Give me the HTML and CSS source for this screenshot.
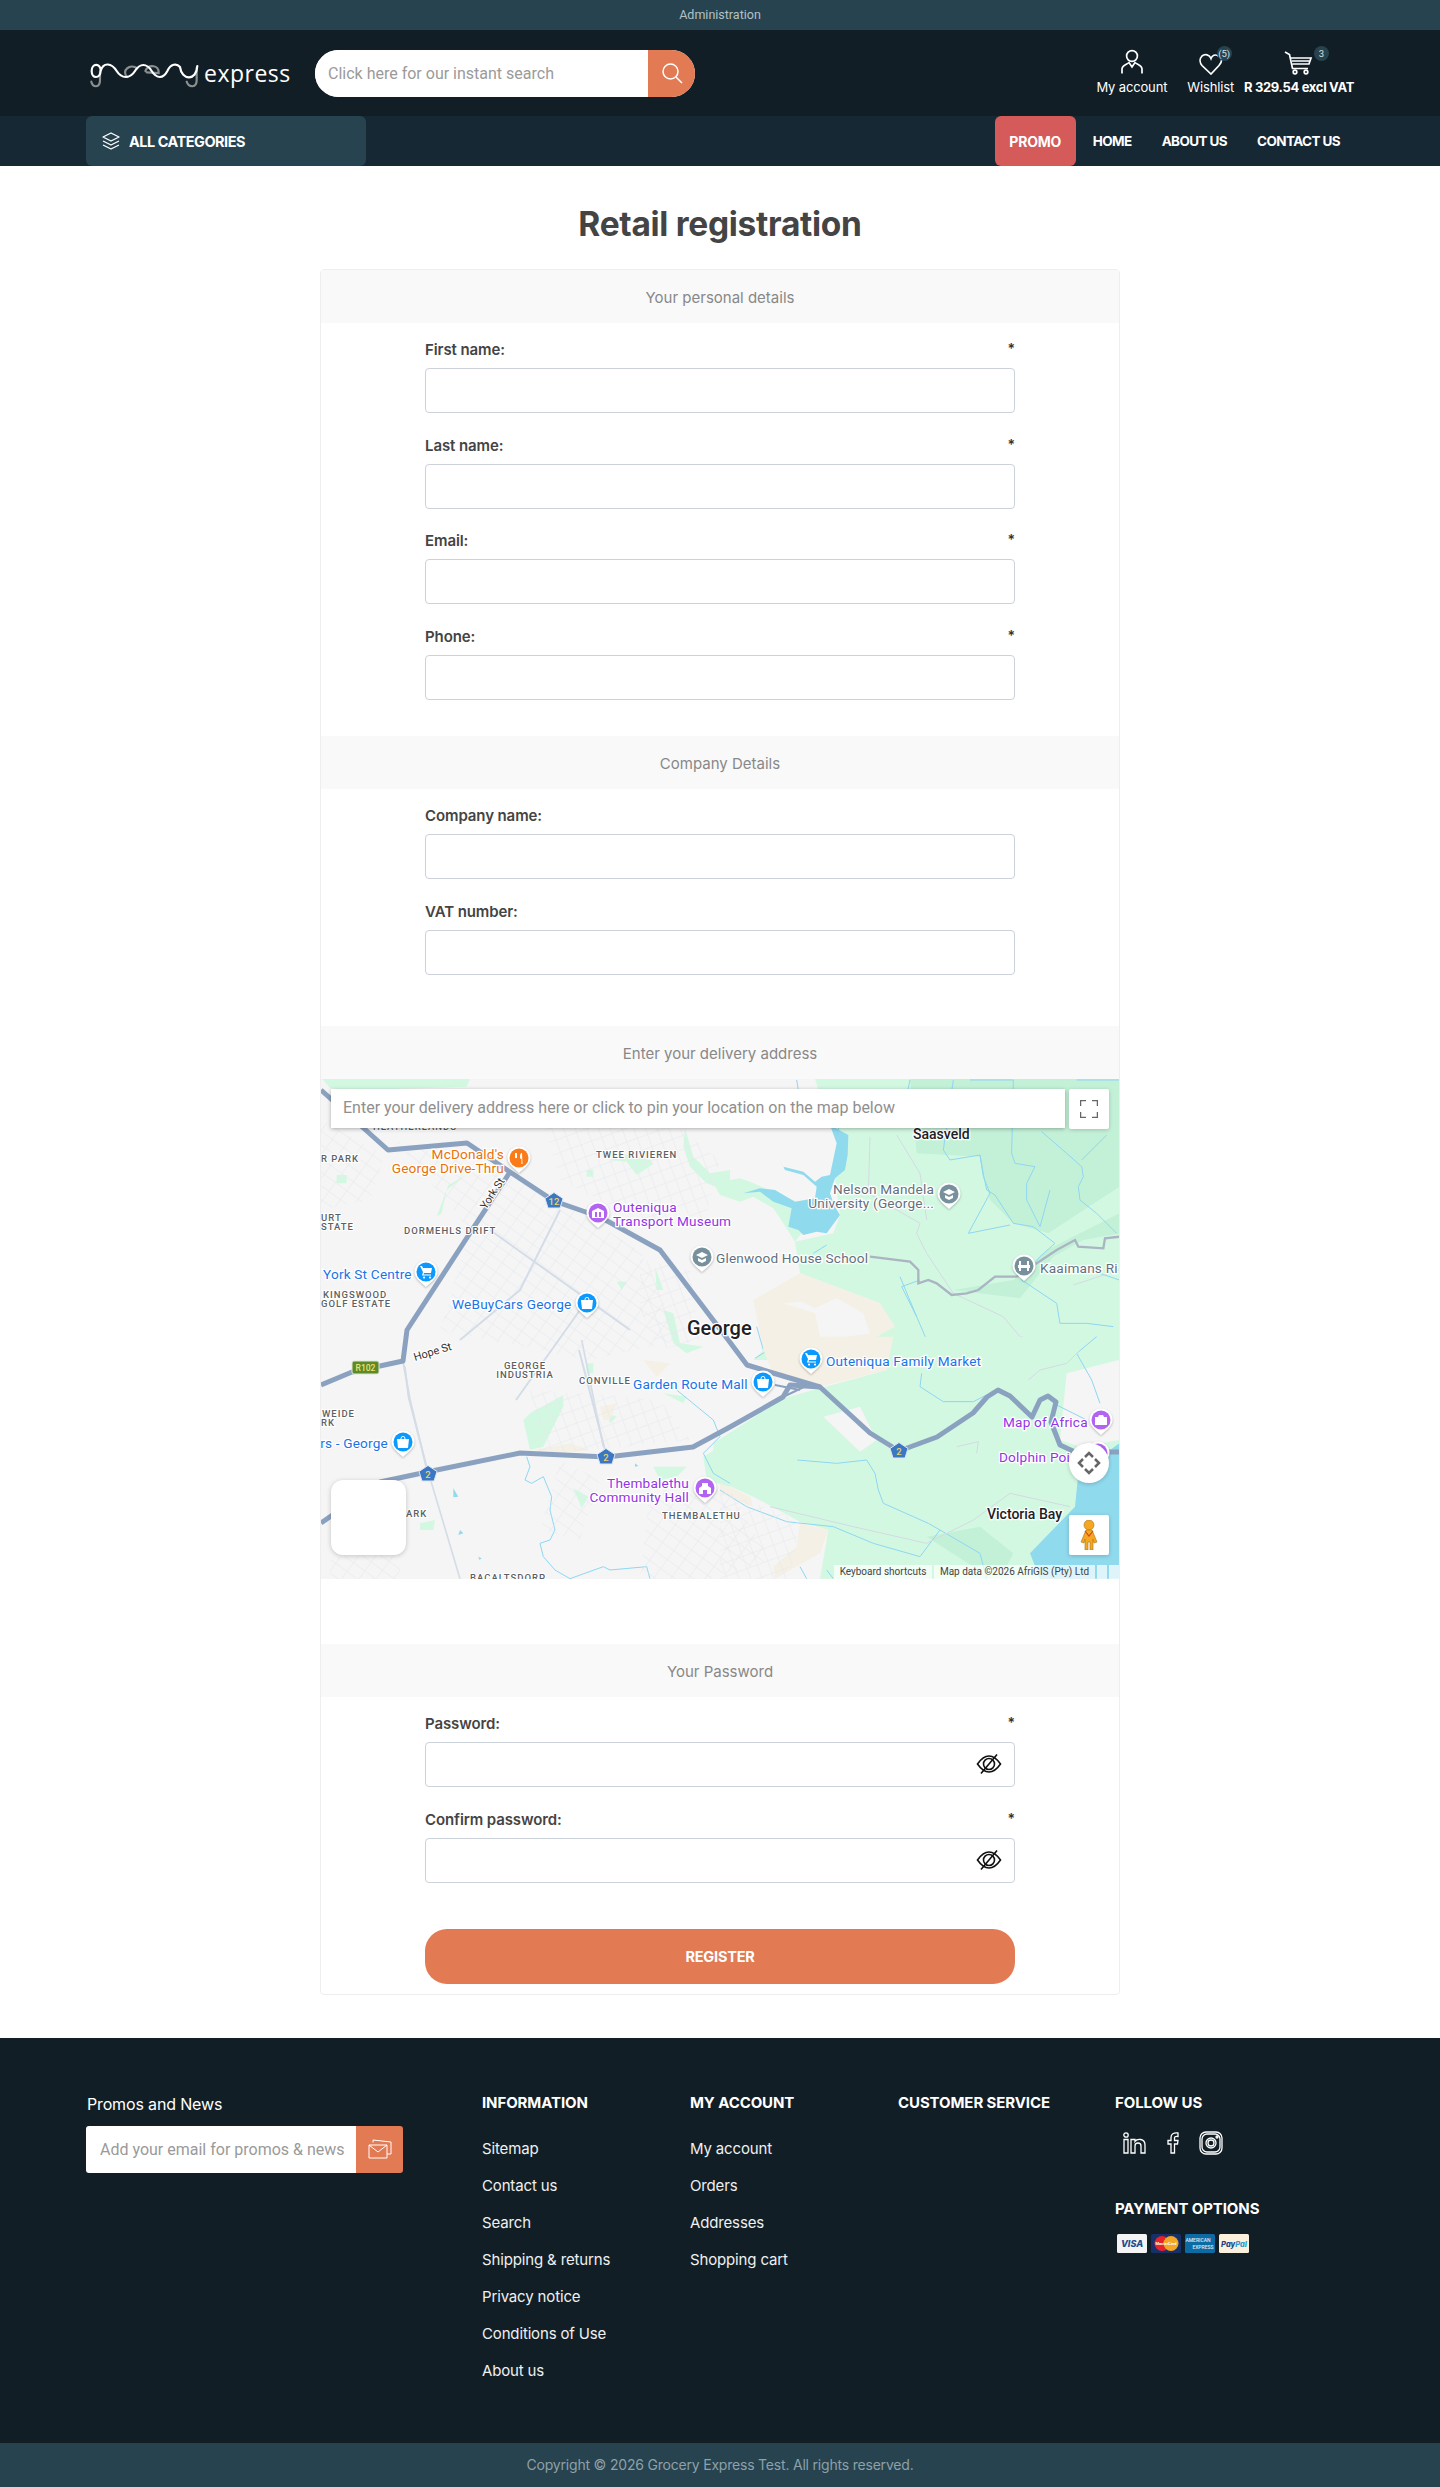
FILE: index.html
```html
<!DOCTYPE html>
<html lang="en">
<head>
<meta charset="utf-8">
<title>Retail registration</title>
<link rel="stylesheet" href="styles.css">
</head>
<body>
<div class="topbar"><a>Administration</a></div>
<header class="header">
  <div class="logo">
    <svg class="logo-wave" viewBox="30 70 330 84" aria-hidden="true">
      <path class="lw-grey" d="M60 100 L60 128 C60 152 38 150 34 132 M142 118 C122 100 150 76 172 92 M196 100 C206 78 238 82 236 106 L200 104 M350 90 L350 128 C350 152 326 150 320 132"/>
      <path class="lw-white" d="M62 98 C62 76 35 76 35 100 C35 124 60 124 62 100 C70 72 95 76 110 100 C125 124 150 124 165 100 C180 76 200 76 215 100 C230 124 250 124 262 100 C272 78 290 76 300 88 C305 130 350 130 352 85"/>
    </svg>
    <span class="logo-text">express</span>
  </div>
  <form class="search">
    <input class="search-input" type="text" placeholder="Click here for our instant search">
    <button class="search-btn" type="button" aria-label="Search">
      <svg viewBox="0 0 24 24" width="24" height="24"><circle cx="10.5" cy="10.5" r="7.5"/><path d="M16 16l6 6"/></svg>
    </button>
  </form>
  <div class="header-links">
    <a class="hlink">
      <span class="hicon">
        <svg viewBox="0 0 24 26" width="24" height="26"><circle cx="12" cy="7" r="5.4"/><path d="M2 24.500V20C2 16 7 15.500 9 13.500L12 18L15 13.500C17 15.500 22 16 22 20V24.500"/></svg>
      </span>
      <span class="hlabel">My account</span>
    </a>
    <a class="hlink">
      <span class="hicon">
        <svg viewBox="0 0 24 22" width="24" height="22"><path d="M20 3.500C16 .5 13 2.500 12 5.500C10.500 1.500 6 .5 3 3C0 6 1 10 3 12.500L12 21L20 12.500C22.500 9.500 23 7 22.500 5.500"/></svg>
        <b class="badge badge-w">(5)</b>
      </span>
      <span class="hlabel">Wishlist</span>
    </a>
    <a class="hlink hlink-cart">
      <span class="hicon">
        <svg viewBox="0 0 30 24" width="30" height="24"><path d="M1 1L5.500 3.500L8.500 17.500H24M7 7H27L25 13H8.500M8 10H26"/><circle cx="11" cy="21" r="1.800"/><circle cx="22" cy="21" r="1.800"/></svg>
        <b class="badge badge-c">3</b>
      </span>
      <span class="hprice">R 329.54 excl VAT</span>
    </a>
  </div>
</header>
<nav class="nav">
  <a class="cat-btn">
    <svg viewBox="0 0 20 18" width="20" height="18"><path d="M10 1L18 5L10 9L2 5Z"/><path d="M2 9L10 13L18 9"/><path d="M2 13L10 17L18 13"/></svg>
    ALL CATEGORIES
  </a>
  <div class="nav-links">
    <a class="promo">PROMO</a>
    <a>HOME</a>
    <a>ABOUT US</a>
    <a>CONTACT US</a>
  </div>
</nav>
<main class="main">
  <h1 class="title">Retail registration</h1>
  <form class="card">
    <div class="sec-head">Your personal details</div>
    <div class="fields fields-a">
      <div class="field"><div class="label-row"><label>First name:</label><span class="req">*</span></div><input class="inp" type="text"></div>
      <div class="field"><div class="label-row"><label>Last name:</label><span class="req">*</span></div><input class="inp" type="text"></div>
      <div class="field"><div class="label-row"><label>Email:</label><span class="req">*</span></div><input class="inp" type="text"></div>
      <div class="field"><div class="label-row"><label>Phone:</label><span class="req">*</span></div><input class="inp" type="text"></div>
    </div>
    <div class="sec-head">Company Details</div>
    <div class="fields fields-b">
      <div class="field"><div class="label-row"><label>Company name:</label></div><input class="inp" type="text"></div>
      <div class="field"><div class="label-row"><label>VAT number:</label></div><input class="inp" type="text"></div>
    </div>
    <div class="sec-head">Enter your delivery address</div>
    <div class="map">
      <svg class="map-svg" viewBox="321 1079 798 500" width="798" height="500">
        <defs>
          <pattern id="gridA" width="14" height="11" patternUnits="userSpaceOnUse" patternTransform="rotate(36)"><path class="st" d="M0 0H14M0 0V11"/></pattern>
          <pattern id="gridB" width="11" height="13" patternUnits="userSpaceOnUse" patternTransform="rotate(-20)"><path class="st" d="M0 0H11M0 0V13"/></pattern>
          <g id="pin"><path class="pin-o" d="M-11.500 0A11.500 11.500 0 1 1 11.500 0C11.500 6 5 10 0 15C-5 10 -11.500 6 -11.500 0Z"/><circle r="9.500" fill="currentColor"/></g>
          <path id="shield" class="sh" d="M0 -8.500L9 -2.500L6 7H-6L-9 -2.500Z"/>
        </defs>
        <rect x="321" y="1079" width="798" height="500" class="m-bg"/>
        <g transform="translate(310 1060) scale(.33333)">
          <path class="m-g" d="M30 57H480L470 80L130 90L60 85L40 60Z"/>
          <path class="m-g" d="M1125 205L1150 290L1200 340L1260 330V395L1190 370L1140 320L1120 260ZM930 280L1020 300L1030 312L980 345L950 305L900 300Z"/>
          <path class="m-g" d="M380 470L415 375L470 345L410 390L395 460ZM80 345H110V370H80ZM830 330H850V350H830ZM1060 750L1090 760L1110 850L1180 860L1130 880L1090 850ZM920 665L950 665L935 690ZM1035 620L1060 690L1040 690Z"/>
        </g>
        <g transform="translate(720 1060) scale(.33333)">
          <path class="m-g" d="M285 57H480V900H100L130 870L310 860L450 840L525 800L480 730L240 640L225 545L340 520L360 465L345 355L384 225L330 205Z"/>
          <path class="m-g" d="M480 57H1198V900H480Z"/>
          <path class="m-g" d="M-20 370L60 355L90 365L160 395L230 425L285 415L290 460L225 545L190 490L160 445L100 410L60 425L0 405Z"/>
          <path class="m-dg" d="M570 57L590 280L780 290L810 420L880 490L985 520L1198 380V57Z"/>
          <path class="m-dg" d="M700 690L900 715L1000 590L1090 540L1198 520V460L980 570L880 660Z"/>
          <path class="m-w" d="M330 195L385 225L383 285L375 330L345 355L330 400L345 440L360 465L320 520L290 515L250 525L235 510L205 500L215 445L160 425L120 395L70 400L120 385L165 390L225 425L285 415L290 380L250 345L195 330L170 280L190 320L250 335L285 365L305 350L330 345L350 250Z"/>
          <path class="m-t" d="M100 720L240 640L480 730L525 800L450 840L310 860L130 870Z"/>
          <path class="m-l" d="M190 730L245 725L285 745L350 715L430 760L450 820L380 830L300 830L285 760Z"/>
          <path class="m-river" d="M360 190L350 230M230 60L235 90M570 60L540 200M700 60L670 270L690 300L780 285L790 340L800 390L825 405L880 490L940 500L1005 550L960 590L905 660L1010 730L1020 790L1100 790L1180 800M780 285L790 350L810 400L745 520L870 495M880 60L875 280L885 310L945 320L920 370L920 420L960 500L990 390M965 215L1040 280L1085 320L1090 350L1075 380L1080 420L1130 460L1190 520M1160 225L1085 300M1198 60L1070 60M750 60L880 60M540 650L590 770L620 840L520 860M320 555L280 580M110 800L130 870M105 895L145 870L260 875L450 840M600 660L545 680L590 770M1080 620L1198 660"/>
          <path class="m-minor" d="M450 230L445 400L600 490L590 520L620 580L700 700L850 770L900 830L1000 850L1040 890M530 225L600 340L620 480M1060 675L1198 630"/>
          <path class="m-gravel" d="M450 590L570 605L595 630L595 670L625 660L650 670L695 705L740 700L775 690L825 650L890 650L1010 570L1065 540L1075 560L1150 565L1155 535L1198 530"/>
        </g>
        <g transform="translate(720 1340) scale(.33333)">
          <path class="m-g" d="M500 -10H1198V716H300L325 570L240 545L100 470L0 425L-20 400V310L190 175L300 145L500 90Z"/>
          <path class="m-t" d="M130 -10H520L500 90L300 140L160 100L130 30Z"/>
          <path class="m-l" d="M310 230L420 200L470 300L420 335Z"/>
          <path class="m-l" d="M1040 100L1198 60V300L1080 320L1020 300Z"/>
          <path class="m-t" d="M0 425L90 470L100 500L0 460ZM240 550L325 570L300 640L165 716L160 680L230 620Z"/>
          <path class="m-dg" d="M620 590L780 560L880 640L860 680L760 680Z"/>
          <path class="m-w" d="M1198 310L1075 400L1065 500L930 640L960 716H1198Z"/>
          <path class="m-river" d="M0 450L80 500L200 545L340 560L460 610L600 650L660 570L780 640L800 716M232 360L350 370L440 360L465 400L475 450L490 490L625 550L660 570M605 100L600 140L670 185L760 185L800 165M1000 190L1100 240M1130 -10L1070 40L1115 120L1140 190M240 680L260 716M320 690L340 716"/>
          <path class="m-minor" d="M925 120L960 90L1040 70L1080 30M710 320L775 305L770 340M150 500L400 560L620 610L760 540L870 460L1050 500"/>
        </g>
        <g transform="translate(310 1340) scale(.33333)">
          <path class="m-g" d="M1260 300L1180 350L1190 420L1260 440ZM660 220L760 165L760 200L700 320L660 330L640 240ZM890 220L920 230L900 250ZM790 445L835 470L815 505ZM330 550L375 540L370 570L330 570ZM1030 380L1130 380L1100 410L1050 420ZM1060 160L1130 170L1120 190ZM830 70L850 70L850 100L830 100Z"/>
          <path class="m-t" d="M680 330L780 310L840 330L680 345ZM870 200L920 190L900 240L880 240ZM1000 60L1080 70L1040 110Z"/>
          <path class="m-river" d="M1100 150L1210 240L1230 290L1180 340L1210 400L1260 430M650 350L660 380L645 420L665 430L700 410L725 470L720 510L735 570L720 600L690 610L700 650L735 690L780 716M780 716L880 680L900 690L1010 680L1020 716"/>
          <path class="m-w" d="M430 445L445 470L430 472ZM450 570L460 580L445 585ZM505 650L515 655L508 660ZM975 370L985 378L975 380Z"/>
          <path class="m-minor2" d="M285 80L295 170L350 380L450 716M815 0L880 320"/>
        </g>
        <path class="m-grid-a" d="M395 1140L520 1180L640 1250L680 1340L590 1360L440 1330L470 1230Z"/>
        <path class="m-grid-a" d="M321 1120L385 1155L370 1200L321 1210Z"/>
        <path class="m-grid-b" d="M540 1110L630 1090L720 1160L705 1220L640 1220L560 1180Z"/>
        <path class="m-grid-b" d="M640 1260L690 1270L700 1340L660 1350L640 1310Z"/>
        <path class="m-grid-b" d="M530 1390L610 1395L660 1400L690 1440L540 1455Z"/>
        <path class="m-grid-a" d="M650 1490L730 1490L770 1560L710 1579L640 1579Z"/>
        <path class="m-grid-a" d="M560 1460L600 1480L580 1540L540 1530Z"/>
        <path class="m-grid-b" d="M720 1490L800 1520L790 1579L720 1579Z"/>
        <path class="m-grid-a" d="M330 1560L400 1540L400 1579L330 1579Z"/>
        <path class="m-arterial" d="M490 1230L630 1330M580 1310L516 1400M560 1210L520 1290L460 1340"/>
        <path class="m-arterial" d="M403 1361L410 1400L428 1474M579 1350L605 1450"/>
        <path class="m-road" d="M321 1090L388 1150L467 1143L510 1172L554 1201L600 1217L660 1250L723 1333L747 1365L773 1373L820 1387L870 1433L899 1451L937 1437L973 1413L987 1397L998 1390L1010 1396L1032 1417L1040 1400L1048 1396L1056 1402L1051 1422L1060 1445L1075 1452L1119 1452"/>
        <path class="m-road" d="M321 1385L352 1372L403 1361L407 1330L470 1233L510 1172"/>
        <path class="m-road" d="M321 1523L380 1482L427 1472L520 1453L607 1457L693 1447L730 1427L783 1397L790 1385L820 1387"/>
        <path class="m-road-thin" d="M783 1397L810 1384M775 1385L800 1390"/>
        <use href="#shield" x="554" y="1201"/><use href="#shield" x="428" y="1474"/><use href="#shield" x="606" y="1457"/><use href="#shield" x="899" y="1451"/>
        <text class="sh-t" x="554" y="1205">12</text><text class="sh-t" x="428" y="1478">2</text><text class="sh-t" x="606" y="1461">2</text><text class="sh-t" x="899" y="1455">2</text>
        <rect class="r102" x="352" y="1361" width="27" height="13" rx="2"/><text class="r102-t" x="365.500" y="1371">R102</text>
        <text class="m-area" x="373" y="1130">HEATHERLANDS</text>
        <text class="m-area" x="321" y="1162">R PARK</text>
        <text class="m-area" x="596" y="1158">TWEE RIVIEREN</text>
        <text class="m-area" x="321" y="1221">URT</text>
        <text class="m-area" x="321" y="1230">STATE</text>
        <text class="m-area" x="404" y="1234">DORMEHLS DRIFT</text>
        <text class="m-area" x="323" y="1298">KINGSWOOD</text>
        <text class="m-area" x="321" y="1307">GOLF ESTATE</text>
        <text class="m-area m-mid" x="525" y="1369">GEORGE</text>
        <text class="m-area m-mid" x="525" y="1378">INDUSTRIA</text>
        <text class="m-area" x="579" y="1384">CONVILLE</text>
        <text class="m-area" x="322" y="1417">WEIDE</text>
        <text class="m-area" x="321" y="1426">RK</text>
        <text class="m-area" x="406" y="1517">ARK</text>
        <text class="m-area" x="662" y="1519">THEMBALETHU</text>
        <text class="m-area m-mid" x="508" y="1581">BACALTSDORP</text>
        <text class="m-st" transform="translate(486 1210) rotate(-57)">York St</text>
        <text class="m-st" transform="translate(415 1361) rotate(-17)">Hope St</text>

        <text class="ml orange m-end" x="504" y="1159">McDonald's</text>
        <text class="ml orange m-end" x="504" y="1173">George Drive-Thru</text>
        <text class="ml purple" x="613" y="1212">Outeniqua</text>
        <text class="ml purple" x="613" y="1226">Transport Museum</text>
        <text class="ml grey" x="716" y="1263">Glenwood House School</text>
        <text class="ml blue" x="323" y="1279">York St Centre</text>
        <text class="ml blue" x="452" y="1309">WeBuyCars George</text>
        <text class="ml-big" x="687" y="1335">George</text>
        <text class="ml blue" x="826" y="1366">Outeniqua Family Market</text>
        <text class="ml blue" x="633" y="1389">Garden Route Mall</text>
        <text class="ml grey m-end" x="934" y="1194">Nelson Mandela</text>
        <text class="ml grey m-end" x="934" y="1208">University (George...</text>
        <text class="ml-dark" x="913" y="1139">Saasveld</text>
        <text class="ml grey" x="1040" y="1273">Kaaimans Ri</text>
        <text class="ml purple" x="1003" y="1427">Map of Africa</text>
        <text class="ml purple" x="999" y="1462">Dolphin Poi</text>
        <text class="ml-dark" x="987" y="1519">Victoria Bay</text>
        <text class="ml blue m-end" x="388" y="1448">rs - George</text>
        <text class="ml purple m-end" x="689" y="1488">Thembalethu</text>
        <text class="ml purple m-end" x="689" y="1502">Community Hall</text>

        <use href="#pin" class="c-orange" x="519" y="1158"/>
        <path class="gl" d="M515 1153v5h2v-5M516 1158v6M522 1153c-1.500 0-2 2-2 4s1 2 1.500 2v5h1z"/>
        <use href="#pin" class="c-purple" x="598" y="1213"/>
        <path class="gl" d="M592 1211L598 1208L604 1211V1218H592ZM595 1212V1217H597V1212ZM599 1212V1217H601V1212Z"/>
        <use href="#pin" class="c-grey" x="702" y="1257"/>
        <path class="gl" d="M696 1255L702 1252L708 1255L702 1258ZM698 1258L702 1260L706 1258V1261L702 1263L698 1261Z"/>
        <use href="#pin" class="c-blue" x="426" y="1272"/>
        <path class="gl" d="M420 1266H422L423 1268H432L431 1273H424L423.500 1274.500H431V1275.500H422L423 1272ZM424 1276.500a1 1 0 1 0 .1 0ZM430 1276.500a1 1 0 1 0 .1 0Z"/>
        <use href="#pin" class="c-blue" x="587" y="1303"/>
        <path class="gl" d="M581 1300H593L592 1309H582ZM584.500 1300C584.500 1296 589.500 1296 589.500 1300H588.500C588.500 1297 585.500 1297 585.500 1300Z"/>
        <use href="#pin" class="c-grey" x="949" y="1194"/>
        <path class="gl" d="M943 1192L949 1189L955 1192L949 1195ZM945 1195L949 1197L953 1195V1198L949 1200L945 1198Z"/>
        <use href="#pin" class="c-grey" x="1024" y="1266"/>
        <path class="gl" d="M1018 1268V1265H1019V1261H1021V1265H1027V1261H1029V1265H1030V1268H1029V1271H1027V1268H1021V1271H1019V1268Z"/>
        <use href="#pin" class="c-blue" x="811" y="1359"/>
        <path class="gl" d="M805 1353H807L808 1355H817L816 1360H809L808.500 1361.500H816V1362.500H807L808 1359ZM809 1363.500a1 1 0 1 0 .1 0ZM815 1363.500a1 1 0 1 0 .1 0Z"/>
        <use href="#pin" class="c-blue" x="763" y="1382"/>
        <path class="gl" d="M757 1379H769L768 1388H758ZM760.500 1379C760.500 1375 765.500 1375 765.500 1379H764.500C764.500 1376 761.500 1376 761.500 1379Z"/>
        <use href="#pin" class="c-purple" x="1101" y="1420"/>
        <path class="gl" d="M1095 1417H1098L1099 1415H1103L1104 1417H1107V1425H1095Z"/>
        <use href="#pin" class="c-purple" x="1098" y="1453"/>
        <use href="#pin" class="c-blue" x="403" y="1442"/>
        <path class="gl" d="M397 1439H409L408 1448H398ZM400.500 1439C400.500 1435 405.500 1435 405.500 1439H404.500C404.500 1436 401.500 1436 401.500 1439Z"/>
        <use href="#pin" class="c-purple" x="705" y="1488"/>
        <path class="gl" d="M699 1494V1488L702 1486V1483H708V1486L711 1488V1494H707V1490H703V1494Z"/>
      </svg>
      <input class="map-search" type="text" placeholder="Enter your delivery address here or click to pin your location on the map below">
      <div class="map-ctl map-full">
        <svg viewBox="0 0 18 18" width="18" height="18"><path d="M0 6V0H6M12 0H18V6M18 12V18H12M6 18H0V12"/></svg>
      </div>
      <div class="map-blank"></div>
      <div class="map-rotate">
        <svg viewBox="0 0 24 24" width="24" height="24"><path d="M8 6L12 2L16 6M18 8L22 12L18 16M16 18L12 22L8 18M6 16L2 12L6 8"/></svg>
      </div>
      <div class="map-ctl map-peg">
        <svg viewBox="0 0 18 30" width="18" height="30"><circle cx="9" cy="5" r="5" class="peg"/><path class="peg" d="M6 10H12L17 22L14 23L13 19V30H10V22H8V30H5V19L4 23L1 22Z"/><path class="peg-d" d="M5 11L9 16L13 11"/></svg>
      </div>
      <div class="map-attr">
        <span class="attr-cell attr-keys">Keyboard shortcuts</span>
        <span class="attr-cell attr-data">Map data ©2026 AfriGIS (Pty) Ltd</span>
        <span class="attr-cell attr-gap"></span>
        <span class="attr-cell attr-gap"></span>
      </div>
    </div>
    <div class="map-after"></div>
    <div class="sec-head">Your Password</div>
    <div class="fields fields-c">
      <div class="field"><div class="label-row"><label>Password:</label><span class="req">*</span></div>
        <div class="pw"><input class="inp" type="password">
          <svg class="eye" viewBox="0 0 26 20" width="26" height="20"><path d="M1.500 10C6 3.500 10 2 13 2C16 2 20 3.500 24.500 10C20 16.500 16 18 13 18C10 18 6 16.500 1.500 10Z"/><circle cx="13" cy="10" r="5.500"/><path d="M5 19.500L21 .5"/></svg>
        </div></div>
      <div class="field"><div class="label-row"><label>Confirm password:</label><span class="req">*</span></div>
        <div class="pw"><input class="inp" type="password">
          <svg class="eye" viewBox="0 0 26 20" width="26" height="20"><path d="M1.500 10C6 3.500 10 2 13 2C16 2 20 3.500 24.500 10C20 16.500 16 18 13 18C10 18 6 16.500 1.500 10Z"/><circle cx="13" cy="10" r="5.500"/><path d="M5 19.500L21 .5"/></svg>
        </div></div>
      <button class="register" type="button">REGISTER</button>
    </div>
  </form>
</main>
<footer class="footer">
  <div class="foot-grid">
    <div class="foot-news">
      <div class="news-title">Promos and News</div>
      <div class="news-form">
        <input class="news-input" type="text" placeholder="Add your email for promos &amp; news">
        <button class="news-btn" type="button" aria-label="Subscribe">
          <svg viewBox="0 0 24 20" width="24" height="20"><path d="M1 6H19V19H1ZM1 6L10 13L19 6M5 3.500V1L23 3V15L19 15"/></svg>
        </button>
      </div>
    </div>
    <div class="foot-col">
      <h3>INFORMATION</h3>
      <ul><li>Sitemap</li><li>Contact us</li><li>Search</li><li>Shipping &amp; returns</li><li>Privacy notice</li><li>Conditions of Use</li><li>About us</li></ul>
    </div>
    <div class="foot-col">
      <h3>MY ACCOUNT</h3>
      <ul><li>My account</li><li>Orders</li><li>Addresses</li><li>Shopping cart</li></ul>
    </div>
    <div class="foot-col">
      <h3>CUSTOMER SERVICE</h3>
    </div>
    <div class="foot-col">
      <h3>FOLLOW US</h3>
      <div class="social">
        <svg viewBox="0 0 23 22" width="23" height="22"><circle cx="3" cy="3" r="2.200"/><path d="M1 7.500H5V21H1ZM8 7.500H12V9.500C14 6.500 22 6 22 13V21H18V14C18 10 12 10 12 14V21H8Z"/></svg>
        <svg class="so-f" viewBox="0 0 12 22" width="12" height="22"><path d="M4 21V12H1V8.500H4V5.500C4 2 6.500 .5 11 1V4.500C8 4 7.500 5 7.500 6V8.500H11L10.500 12H7.500V21Z"/></svg>
        <svg class="so-i" viewBox="0 0 24 24" width="24" height="24"><rect x="1" y="1" width="22" height="22" rx="6"/><rect x="3" y="3" width="18" height="18" rx="5"/><circle cx="12" cy="12" r="5"/><circle cx="12" cy="12" r="3"/><circle cx="18" cy="6" r="1"/></svg>
      </div>
      <h3 class="pay-head">PAYMENT OPTIONS</h3>
      <div class="pay">
        <svg viewBox="0 0 30 19" width="30" height="19"><rect width="30" height="19" rx="1.500" fill="#f4f4f4"/><text class="p-visa" x="15" y="13">VISA</text></svg>
        <svg viewBox="0 0 30 19" width="30" height="19"><rect width="30" height="19" rx="1.500" fill="#15306b"/><circle cx="11" cy="9.500" r="7.500" fill="#e8222b"/><circle cx="20" cy="9.500" r="7.500" fill="#f5a623"/><text class="p-mc" x="15" y="11">MasterCard</text></svg>
        <svg viewBox="0 0 30 19" width="30" height="19"><rect width="30" height="19" rx="1.500" fill="#0c6aa5"/><text class="p-am" x="13" y="8">AMERICAN</text><text class="p-am" x="18" y="15">EXPRESS</text></svg>
        <svg viewBox="0 0 30 19" width="30" height="19"><rect width="30" height="19" rx="1.500" fill="#fbf0dc"/><text class="p-pp" x="15" y="12.500">Pay<tspan class="p-pp2">Pal</tspan></text></svg>
      </div>
    </div>
  </div>
</footer>
<div class="copy">Copyright © 2026 Grocery Express Test. All rights reserved.</div>
</body>
</html>
```

FILE: styles.css
```css
* { box-sizing: border-box; }
html, body { margin: 0; padding: 0; }
body { font-family: "Inter", "Noto Sans", sans-serif; color: #444; background: #fff; }
ul { list-style: none; margin: 0; padding: 0; }
h1, h3 { margin: 0; }
button { border: 0; padding: 0; cursor: pointer; }
input { font-family: "Roboto", sans-serif; outline: 0; }

.topbar { height: 30px; background: #26434f; display: flex; align-items: center; justify-content: center; font: 12.500px/30px "Roboto", sans-serif; color: #b4c0c6; }

.header { height: 86px; background: #121e25; display: flex; align-items: center; padding: 0 86px 0 90px; }
.logo { width: 225px; display: flex; align-items: center; gap: 4px; height: 30px; }
.logo-wave { width: 110px; height: 28px; overflow: visible; flex: none; margin-top: 3px; }
.logo-wave path { fill: none; stroke-width: 6.500; stroke-linecap: round; }
.lw-grey { stroke: #8a8f92; }
.lw-white { stroke: #fff; }
.logo-text { color: #fff; font: 400 23px/30px "Open Sans", sans-serif; letter-spacing: .5px; }
.search { width: 380px; height: 47px; border-radius: 24px; overflow: hidden; display: flex; background: #fff; }
.search-input { flex: 1; min-width: 0; border: 0; padding: 0 0 0 13px; font-size: 16px; color: #333; background: #fff; }
.search-input::placeholder, .news-input::placeholder { color: #9a9a9a; opacity: 1; }
.search-btn { width: 47px; background: #e27a54; display: flex; align-items: center; justify-content: center; }
.search-btn svg { fill: none; stroke: #fff; stroke-width: 1.500; }
.header-links { margin-left: auto; display: flex; align-items: flex-end; }
.hlink { display: flex; flex-direction: column; align-items: center; color: #fff; }
.hlink + .hlink { margin-left: 20px; }
.hlink-cart { margin-left: 10px !important; }
.hicon { position: relative; display: flex; align-items: flex-end; justify-content: center; height: 25px; margin-bottom: 3px; }
.hicon svg { fill: none; stroke: #fff; stroke-width: 1.700; }
.badge { position: absolute; width: 15px; height: 15px; border-radius: 50%; background: #26434f; color: #d7e0e4; font: 400 9.500px/15px "Roboto", sans-serif; text-align: center; }
.badge-w { top: -4px; right: -9px; }
.badge-c { top: -4px; right: -15px; }
.hlabel { font-size: 13px; line-height: 18px; font-weight: 400; letter-spacing: -.15px; white-space: nowrap; }
.hprice { font-size: 13px; line-height: 18px; font-weight: 700; letter-spacing: -.33px; white-space: nowrap; }

.nav { height: 50px; background: #162833; display: flex; justify-content: space-between; padding: 0 100px 0 86px; }
.cat-btn { width: 280px; background: #26434f; border-radius: 6px; color: #fff; font-size: 14.500px; font-weight: 700; letter-spacing: -.5px; display: flex; align-items: center; gap: 8px; padding-left: 15px; }
.cat-btn svg { fill: none; stroke: #fff; stroke-width: 1.300; stroke-linejoin: round; }
.nav-links { display: flex; align-items: stretch; gap: 30px; }
.nav-links a { color: #fff; font-size: 13.500px; font-weight: 700; letter-spacing: -.6px; display: flex; align-items: center; }
.nav-links .promo { width: 81px; margin-right: -13px; font-size: 14px; justify-content: center; background: #d55a5a; border-radius: 6px; letter-spacing: -.2px; }

.main { padding: 37px 0 43px; }
.title { font-size: 33.500px; line-height: 42px; font-weight: 700; letter-spacing: -.3px; color: #444; text-align: center; margin-bottom: 24px; }
.card { width: 800px; margin: 0 auto; border: 1px solid #eee; border-radius: 4px; background: #fff; }
.sec-head { height: 53px; padding-top: 2px; background: #f9f9f9; display: flex; align-items: center; justify-content: center; font-size: 15px; color: #888; }
.fields { padding: 17px 104px 0; }
.fields-a { padding-bottom: 14px; }
.fields-b { padding-bottom: 29px; }
.fields-c { padding-bottom: 10px; }
.field { margin-bottom: 22.500px; }
.label-row { height: 20px; margin-bottom: 8px; display: flex; justify-content: space-between; }
.label-row label { font-size: 15px; line-height: 20px; font-weight: 600; letter-spacing: -.1px; color: #444; }
.req { font-size: 14px; line-height: 17px; font-weight: 600; color: #333; }
.inp { display: block; width: 100%; height: 45px; border: 1px solid #ccd2d9; border-radius: 4px; background: #fff; }
.pw { position: relative; }
.eye { position: absolute; right: 13px; top: 12px; fill: none; stroke: #111; stroke-width: 1.600; }
.register { display: block; width: 100%; height: 55px; margin-top: 46px; border-radius: 22px; background: #e27a54; color: #fff; font: 700 14.500px/55px "Inter", sans-serif; letter-spacing: -.2px; }

.map { position: relative; height: 500px; overflow: hidden; }
.map-svg { display: block; }
.map-after { height: 65px; }
.m-bg { fill: #f5f5f5; }
.m-g { fill: #d3f8e2; }
.m-dg { fill: #c3f1d7; }
.m-w { fill: #90daee; }
.m-t { fill: #f5f0e5; }
.m-l { fill: #f5f5f5; }
.m-river { fill: none; stroke: #8ed6f2; stroke-width: 3; }
.m-minor { fill: none; stroke: #d5d9e3; stroke-width: 3; }
.m-minor2 { fill: none; stroke: #d4dde7; stroke-width: 5; }
.m-gravel { fill: none; stroke: #aab4c2; stroke-width: 7; }
.st { fill: none; stroke: #e6e8ed; stroke-width: 1; }
.m-grid-a { fill: url(#gridA); }
.m-grid-b { fill: url(#gridB); }
.m-arterial { fill: none; stroke: #d4dde7; stroke-width: 2; }
.m-road { fill: none; stroke: #8ba1c0; stroke-width: 5; stroke-linejoin: round; }
.m-road-thin { fill: none; stroke: #8ba1c0; stroke-width: 2; }
.sh { fill: #3b78c4; stroke: #dfe6f0; stroke-width: 1; }
.sh-t { font: 500 9.500px "Roboto", sans-serif; fill: #e9d36a; text-anchor: middle; }
.r102 { fill: #5a8a2a; stroke: #dfe6d0; }
.r102-t { font: 500 8.500px "Roboto", sans-serif; fill: #f0e070; text-anchor: middle; }
.m-area { font: 500 9.500px "Roboto", sans-serif; letter-spacing: 1px; fill: #5c5f63; paint-order: stroke; stroke: #fff; stroke-width: 2px; }
.m-mid { text-anchor: middle; }
.m-st { font: 400 11px "Roboto", sans-serif; fill: #333; paint-order: stroke; stroke: #fff; stroke-width: 2.500px; }
.ml { font: 400 13.600px "Roboto", sans-serif; letter-spacing: .2px; paint-order: stroke; stroke: #fff; stroke-width: 2.500px; }
.ml-big { font: 500 20px "Roboto", sans-serif; fill: #202124; paint-order: stroke; stroke: #fff; stroke-width: 2.500px; }
.ml-dark { font: 500 14px "Roboto", sans-serif; fill: #202124; paint-order: stroke; stroke: #fff; stroke-width: 2.500px; }
.m-end { text-anchor: end; }
.ml.orange { fill: #e8710a; }
.ml.purple { fill: #9334e6; }
.ml.grey { fill: #5f7180; }
.ml.blue { fill: #1a73e8; }
.c-orange { color: #fa7b17; }
.c-purple { color: #b263f2; }
.c-grey { color: #78909c; }
.c-blue { color: #0a99ff; }
.pin-o { fill: #fff; filter: drop-shadow(0 1px 1px rgba(0,0,0,.25)); }
.gl { fill: #fff; }
.map-search { position: absolute; left: 10px; top: 10px; width: 734px; height: 39px; border: 0; padding: 0 0 2px 12px; background: #fff; font-size: 16px; box-shadow: 0 1px 4px rgba(0,0,0,.3); }
.map-search::placeholder { color: #8f8f8f; opacity: 1; }
.map-ctl { position: absolute; width: 40px; height: 40px; background: #fff; display: flex; align-items: center; justify-content: center; border-radius: 2px; box-shadow: 0 1px 4px rgba(0,0,0,.2); }
.map-full { top: 10px; right: 10px; }
.map-full svg { fill: none; stroke: #666; stroke-width: 2.500; }
.map-peg { right: 10px; bottom: 24px; }
.peg { fill: #f5a623; stroke: #a87615; stroke-width: .6; }
.peg-d { fill: none; stroke: #d6451d; stroke-width: 1.200; }
.map-blank { position: absolute; left: 10px; bottom: 24px; width: 75px; height: 75px; background: #fff; border-radius: 12px; box-shadow: 0 1px 5px rgba(0,0,0,.2); }
.map-rotate { position: absolute; right: 10px; bottom: 96px; width: 40px; height: 40px; border-radius: 50%; background: #fff; display: flex; align-items: center; justify-content: center; box-shadow: 0 1px 4px rgba(0,0,0,.2); }
.map-rotate svg { fill: none; stroke: #666; stroke-width: 2.500; }
.map-attr { position: absolute; right: 0; bottom: 0; height: 14px; display: flex; gap: 2px; font: 400 10px/14px "Roboto", sans-serif; color: #444; }
.attr-cell { background: rgba(255,255,255,.7); display: block; }
.attr-keys { width: 98px; text-align: center; }
.attr-data { width: 161px; text-align: center; }
.attr-gap { width: 10px; }

.footer { height: 405px; background: #121e25; color: #fff; padding: 55px 0 0 86px; }
.foot-grid { display: grid; grid-template-columns: 396px 208px 208px 217px 200px; }
.news-title { font-size: 16px; line-height: 22px; padding-left: 1px; margin-bottom: 11px; letter-spacing: -.15px; }
.news-form { width: 317px; height: 47px; display: flex; border-radius: 3px; overflow: hidden; }
.news-input { flex: 1; min-width: 0; border: 0; background: #fff; padding: 0 0 0 14px; font-size: 16px; }
.news-btn { width: 47px; background: #e27a54; display: flex; align-items: center; justify-content: center; }
.news-btn svg { fill: none; stroke: #fff; stroke-width: 1; }
.foot-col h3 { font-size: 15px; line-height: 20px; font-weight: 700; letter-spacing: -.1px; color: #fff; }
.foot-col ul { margin-top: 17px; }
.foot-col li { height: 37px; line-height: 37px; font-size: 15px; letter-spacing: -.15px; color: #eef0f1; }
.social { display: flex; gap: 21px; align-items: center; padding-left: 8px; margin-top: 18px; }
.social svg { fill: none; stroke: #fff; stroke-width: 1.300; flex: none; }
.so-i { margin-left: -1px; }
.foot-col .pay-head { margin-top: 44px; }
.pay { display: flex; gap: 4px; padding-left: 2px; margin-top: 15px; }
.p-visa { font: italic 800 9px "Inter", sans-serif; fill: #1a4d8f; text-anchor: middle; }
.p-mc { font: 700 4px "Roboto", sans-serif; fill: #fff; text-anchor: middle; }
.p-am { font: 500 5px "Roboto", sans-serif; fill: #dfeaf3; text-anchor: middle; }
.p-pp { font: italic 800 7.500px "Inter", sans-serif; fill: #1b3f8f; text-anchor: middle; }
.p-pp2 { fill: #2a9ad6; }

.copy { height: 44px; background: #26434f; color: #8ea0a8; font-size: 14px; letter-spacing: -.2px; display: flex; align-items: center; justify-content: center; }
```
